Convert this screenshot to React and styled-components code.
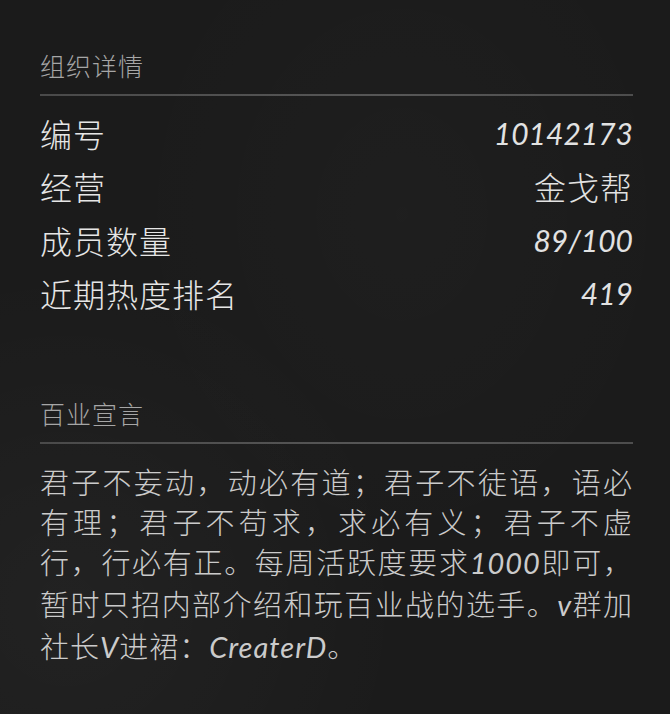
import React from 'react';
import styled, { createGlobalStyle } from 'styled-components';

const GlobalStyle = createGlobalStyle`
	html, body {
		margin: 0;
		padding: 0;
		background: #1b1b1b;
	}
	body {
		font-family: "Noto Sans CJK SC", "Noto Sans", sans-serif;
	}
`;

const details = [
	{ label: '编号', value: '10142173', latin: true },
	{ label: '经营', value: '金戈帮' },
	{ label: '成员数量', value: '89/100', latin: true },
	{ label: '近期热度排名', value: '419', latin: true },
];

export default function App() {
	return (
		<>
			<GlobalStyle />
			<Panel>
				<Section>
					<SectionTitle>组织详情</SectionTitle>
					<Divider />
					<Rows>
						{details.map((d) => (
							<Row key={d.label}>
								<Label>{d.label}</Label>
								<Value $latin={d.latin}>{d.value}</Value>
							</Row>
						))}
					</Rows>
				</Section>

				<Section $gap>
					<SectionTitle>百业宣言</SectionTitle>
					<Divider />
					<Manifesto>
						<Line>君子不妄动，动必有道；君子不徒语，语必</Line>
						<Line>有理；君子不苟求，求必有义；君子不虚</Line>
						<Line>
							行，行必有正。每周活跃度要求<Latin>1000</Latin>即可，
						</Line>
						<Line>
							暂时只招内部介绍和玩百业战的选手。<Latin>v</Latin>群加
						</Line>
						<Line $last>
							社长<Latin>V</Latin>进裙：<Latin>CreaterD</Latin>。
						</Line>
					</Manifesto>
				</Section>
			</Panel>
		</>
	);
}

const Panel = styled.div`
	width: 670px;
	height: 714px;
	box-sizing: border-box;
	padding: 50px 37px 0 40px;
	background:
		radial-gradient(ellipse at 10% 85%, rgba(255, 255, 255, 0.03), transparent 40%),
		radial-gradient(ellipse at 60% 30%, rgba(255, 255, 255, 0.015), transparent 50%),
		#1b1b1b;
	overflow: hidden;
`;

const Section = styled.section`
	display: flex;
	flex-direction: column;
	margin-top: ${(p) => (p.$gap ? '78px' : '0')};
`;

const SectionTitle = styled.h3`
	margin: 0;
	font-size: 25px;
	line-height: 30px;
	font-weight: 300;
	letter-spacing: 1px;
	color: #a6a6a6;
`;

const Divider = styled.div`
	height: 2px;
	margin-top: 14px;
	background: linear-gradient(90deg, #4a4a4a, #575757 60%, #4d4d4d);
`;

const Rows = styled.div`
	display: flex;
	flex-direction: column;
	margin-top: 10px;
`;

const Row = styled.div`
	display: flex;
	align-items: center;
	justify-content: space-between;
	height: 53.5px;
	color: #e6e6e6;
`;

const Label = styled.span`
	font-size: 32px;
	font-weight: 300;
	letter-spacing: 1px;
	line-height: 1;
`;

const Value = styled.span`
	font-size: ${(p) => (p.$latin ? '30px' : '32px')};
	font-family: ${(p) =>
		p.$latin ? '"Lato", "Noto Sans", sans-serif' : '"Noto Sans CJK SC", sans-serif'};
	font-style: ${(p) => (p.$latin ? 'italic' : 'normal')};
	font-weight: ${(p) => (p.$latin ? 400 : 300)};
	letter-spacing: ${(p) => (p.$latin ? '0' : '1px')};
	line-height: 1;
	color: #e2e2e2;
`;

const Manifesto = styled.div`
	margin-top: 17px;
	color: #cbcbcb;
	font-size: 29px;
	font-weight: 300;
	letter-spacing: 1px;
`;

const Line = styled.div`
	line-height: 40px;
	text-align: justify;
	text-align-last: ${(p) => (p.$last ? 'left' : 'justify')};
	white-space: nowrap;
`;

const Latin = styled.span`
	font-family: "Lato", "Noto Sans", sans-serif;
	font-style: italic;
	font-weight: 400;
	font-size: 29px;
	letter-spacing: 1px;
`;
